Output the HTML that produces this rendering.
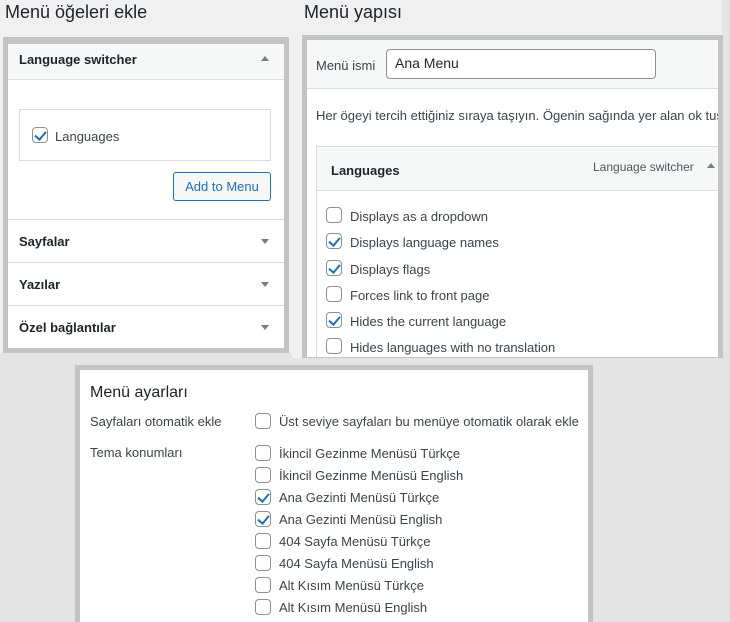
<!DOCTYPE html>
<html><head><meta charset="utf-8"><style>
*{box-sizing:border-box;margin:0;padding:0}
html,body{width:730px;height:622px;overflow:hidden}
body{background:#f0f0f1;font-family:"Liberation Sans",sans-serif;font-size:13px;color:#3c434a;position:relative}
.a{position:absolute;white-space:nowrap}
.h{font-size:18px;color:#1d2327}
.cb{position:absolute;width:16px;height:16px;border:1px solid #8c8f94;border-radius:4px;background:#fff}
.cb.on::after{content:"";position:absolute;left:4px;top:1px;width:5px;height:9px;border:solid #2271b1;border-width:0 2px 2px 0;transform:rotate(40deg)}
.tri{position:absolute;width:0;height:0;border-left:4px solid transparent;border-right:4px solid transparent}
.up{border-bottom:5px solid #787c82}
.dn{border-top:5px solid #787c82}
.b{font-weight:bold;color:#1d2327}
</style></head><body>
<div class="a h" style="left:5px;top:2px">Menü öğeleri ekle</div>
<div class="a h" style="left:304px;top:2px">Menü yapısı</div>

<!-- left panel -->
<div class="a" style="left:3px;top:37px;width:286px;height:316px;border:5px solid #c3c3c3;border-top-width:7px;background:#fff">
  <div class="a" style="left:0;top:0;width:276px;height:36px;background:#f6f7f7;border-bottom:1px solid #dcdcde"></div>
  <div class="a b" style="left:11px;top:8px">Language switcher</div>
  <div class="tri up" style="left:253px;top:12px"></div>
  <div class="a" style="left:11px;top:65px;width:252px;height:52px;border:1px solid #dcdcde"></div>
  <div class="cb on" style="left:24px;top:83px"></div>
  <div class="a" style="left:47px;top:85px">Languages</div>
  <div class="a" style="left:165px;top:128px;width:98px;height:29px;border:1px solid #2271b1;border-radius:3px;color:#2271b1;text-align:center;line-height:27px;background:#f6f7f7">Add to Menu</div>
  <div class="a" style="left:0;top:175px;width:276px;border-top:1px solid #dcdcde"></div>
  <div class="a b" style="left:11px;top:190px">Sayfalar</div><div class="tri dn" style="left:253px;top:195px"></div>
  <div class="a" style="left:0;top:218px;width:276px;border-top:1px solid #dcdcde"></div>
  <div class="a b" style="left:11px;top:233px">Yazılar</div><div class="tri dn" style="left:253px;top:238px"></div>
  <div class="a" style="left:0;top:261px;width:276px;border-top:1px solid #dcdcde"></div>
  <div class="a b" style="left:11px;top:276px">Özel bağlantılar</div><div class="tri dn" style="left:253px;top:281px"></div>
</div>

<!-- right panel -->
<div class="a" style="left:722px;top:0;width:8px;height:360px;background:#e4e4e4"></div>
<div class="a" style="left:302px;top:35px;width:421px;height:327px;border:5px solid #c3c3c3;background:#fff;overflow:hidden">
  <div class="a" style="left:0;top:0;width:420px;height:49px;background:#f6f7f7;border-bottom:1px solid #dcdcde"></div>
  <div class="a" style="left:9px;top:18px">Menü ismi</div>
  <div class="a" style="left:79px;top:9px;width:270px;height:30px;border:1px solid #8c8f94;border-radius:4px;background:#fff;color:#1d2327;font-size:14px;padding:5px 8px">Ana Menu</div>
  <div class="a" style="left:9px;top:68px">Her ögeyi tercih ettiğiniz sıraya taşıyın. Ögenin sağında yer alan ok tuşuna</div>
  <div class="a" style="left:9px;top:106px;width:420px;height:240px;border:1px solid #dcdcde"></div>
  <div class="a" style="left:10px;top:107px;width:420px;height:44px;background:#f6f7f7;border-bottom:1px solid #dcdcde"></div>
  <div class="a b" style="left:24px;top:123px">Languages</div>
  <div class="a" style="left:286px;top:120px;font-size:12px;color:#50575e">Language switcher</div>
  <div class="tri up" style="left:400px;top:123px"></div>
  <div class="cb" style="left:19px;top:167px"></div><div class="a" style="left:43px;top:169px">Displays as a dropdown</div>
  <div class="cb on" style="left:19px;top:193px"></div><div class="a" style="left:43px;top:195px">Displays language names</div>
  <div class="cb on" style="left:19px;top:220px"></div><div class="a" style="left:43px;top:222px">Displays flags</div>
  <div class="cb" style="left:19px;top:246px"></div><div class="a" style="left:43px;top:248px">Forces link to front page</div>
  <div class="cb on" style="left:19px;top:272px"></div><div class="a" style="left:43px;top:274px">Hides the current language</div>
  <div class="cb" style="left:19px;top:298px"></div><div class="a" style="left:43px;top:300px">Hides languages with no translation</div>
</div>

<!-- bottom -->
<div class="a" style="left:0;top:358px;width:730px;height:264px;background:#e4e4e4"></div>
<div class="a" style="left:0;top:353px;width:292px;height:5px;background:#e4e4e4"></div>
<div class="a" style="left:75px;top:365px;width:518px;height:272px;border:5px solid #c3c3c3;background:#fff">
  <div class="a" style="left:10px;top:14px;font-size:16px;color:#1d2327">Menü ayarları</div>
  <div class="a" style="left:10px;top:44px">Sayfaları otomatik ekle</div>
  <div class="cb" style="left:175px;top:43px"></div><div class="a" style="left:199px;top:44px">Üst seviye sayfaları bu menüye otomatik olarak ekle</div>
  <div class="a" style="left:10px;top:75px">Tema konumları</div>
  <div class="cb" style="left:175px;top:75px"></div><div class="a" style="left:199px;top:76px">İkincil Gezinme Menüsü Türkçe</div>
  <div class="cb" style="left:175px;top:97px"></div><div class="a" style="left:199px;top:98px">İkincil Gezinme Menüsü English</div>
  <div class="cb on" style="left:175px;top:119px"></div><div class="a" style="left:199px;top:120px">Ana Gezinti Menüsü Türkçe</div>
  <div class="cb on" style="left:175px;top:141px"></div><div class="a" style="left:199px;top:142px">Ana Gezinti Menüsü English</div>
  <div class="cb" style="left:175px;top:163px"></div><div class="a" style="left:199px;top:164px">404 Sayfa Menüsü Türkçe</div>
  <div class="cb" style="left:175px;top:185px"></div><div class="a" style="left:199px;top:186px">404 Sayfa Menüsü English</div>
  <div class="cb" style="left:175px;top:207px"></div><div class="a" style="left:199px;top:208px">Alt Kısım Menüsü Türkçe</div>
  <div class="cb" style="left:175px;top:229px"></div><div class="a" style="left:199px;top:230px">Alt Kısım Menüsü English</div>
</div>
</body></html>
